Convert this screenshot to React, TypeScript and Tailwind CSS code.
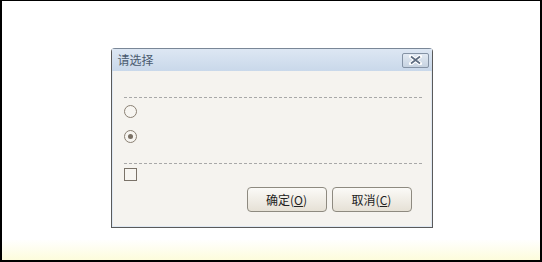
import React from 'react';

const font = { fontFamily: '"Noto Sans CJK SC", "Liberation Sans", sans-serif' };

const Radio = ({ checked }: { checked?: boolean }) => (
  <span className="flex h-[13px] w-[13px] items-center justify-center rounded-full border border-[#8a8073] bg-[#f7f5f1]">
    {checked && <span className="h-[5px] w-[5px] rounded-full bg-[#7a7064]" />}
  </span>
);

const Btn = ({ label, hot }: { label: string; hot: string }) => (
  <button className="flex h-[25px] w-[80px] items-center justify-center rounded-[4px] border border-[#8e8a80] bg-gradient-to-b from-[#fbfaf7] to-[#e6e1d6] text-[12px] text-[#222]">
    {label}(<span className="underline">{hot}</span>)
  </button>
);

const App = () => {
  return (
    <div
      className="flex h-[262px] w-[542px] flex-col border-x-2 border-t border-b-2 border-black bg-gradient-to-b from-white from-[92%] to-[#fdfcdc]"
      style={font}
    >
      <div className="flex justify-center pt-[47px] pl-[1px]">
        <div className="flex h-[180px] w-[322px] flex-col rounded-t-[4px] border border-[#5a5a5a] border-t-[#7a8797] bg-[#dfe8f2]">
          <div className="flex h-[22px] items-center justify-between bg-gradient-to-b from-[#dde7f3] to-[#c9d8ea] pl-[6px] pr-[3px]">
            <span className="text-[12px] text-[#4a5a6e]">请选择</span>
            <span className="flex h-[15px] w-[27px] items-center justify-center rounded-[2px] border border-[#8593a5] bg-gradient-to-b from-[#e2eaf3] to-[#c7d3e1]">
              <svg width="15" height="10" viewBox="0 0 15 10">
                <path d="M3 1.5 L12 8.5 M12 1.5 L3 8.5" stroke="#ffffff" strokeWidth="4" strokeLinecap="round" />
                <path d="M3 1.5 L12 8.5 M12 1.5 L3 8.5" stroke="#5c6b7f" strokeWidth="1.6" />
              </svg>
            </span>
          </div>
          <div className="mx-[1px] mb-[1px] flex flex-1 flex-col bg-[#f5f3ef] pl-[11px] pr-[9px] pt-[26px]">
            <div className="border-t border-dashed border-[#a8a8a8]" />
            <div className="mt-[7px] flex flex-col gap-[12px]">
              <Radio />
              <Radio checked />
            </div>
            <div className="mt-[20px] border-t border-dashed border-[#a8a8a8]" />
            <span className="mt-[4px] block h-[13px] w-[13px] border border-[#7a7268] bg-[#f7f5f1]" />
            <div className="mt-[6px] flex justify-end gap-[5px] pr-[10px]">
              <Btn label="确定" hot="O" />
              <Btn label="取消" hot="C" />
            </div>
          </div>
        </div>
      </div>
    </div>
  );
};

export default App;
